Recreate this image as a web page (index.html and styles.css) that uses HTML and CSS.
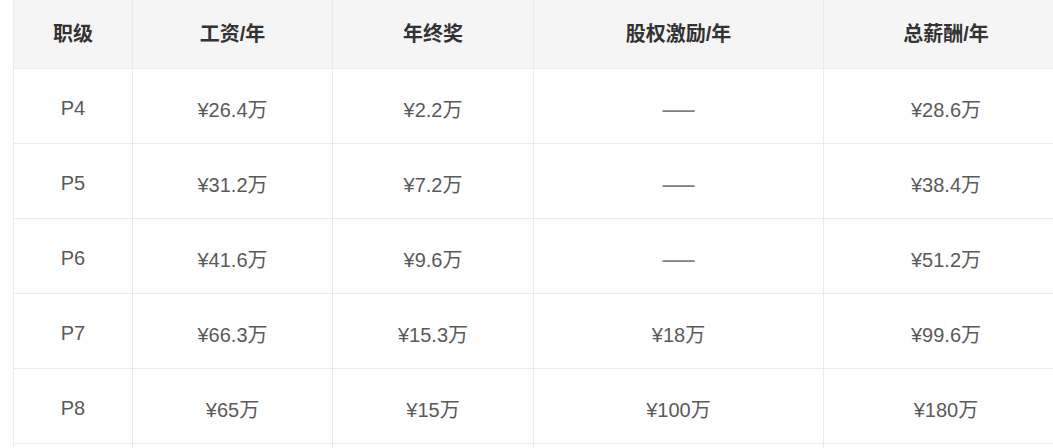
FILE: index.html
```html
<!DOCTYPE html>
<html lang="zh-CN">
<head>
<meta charset="utf-8">
<link rel="stylesheet" href="styles.css">
</head>
<body>
<div class="wrap">
<table class="salary">
  <colgroup>
    <col class="c1"><col class="c2"><col class="c3"><col class="c4"><col class="c5">
  </colgroup>
  <thead>
    <tr><th>职级</th><th>工资/年</th><th>年终奖</th><th>股权激励/年</th><th>总薪酬/年</th></tr>
  </thead>
  <tbody>
    <tr><td>P4</td><td>¥26.4万</td><td>¥2.2万</td><td class="dash">——</td><td>¥28.6万</td></tr>
    <tr><td>P5</td><td>¥31.2万</td><td>¥7.2万</td><td class="dash">——</td><td>¥38.4万</td></tr>
    <tr><td>P6</td><td>¥41.6万</td><td>¥9.6万</td><td class="dash">——</td><td>¥51.2万</td></tr>
    <tr><td>P7</td><td>¥66.3万</td><td>¥15.3万</td><td>¥18万</td><td>¥99.6万</td></tr>
    <tr><td>P8</td><td>¥65万</td><td>¥15万</td><td>¥100万</td><td>¥180万</td></tr>
    <tr><td></td><td></td><td></td><td></td><td></td></tr>
  </tbody>
</table>
</div>
</body>
</html>
```
FILE: styles.css
```css
html, body {
  margin: 0;
  padding: 0;
  background: #ffffff;
  overflow: hidden;
}
.wrap {
  padding-left: 13px;
  width: 1100px;
}
.salary {
  border-collapse: collapse;
  table-layout: fixed;
  width: 1055px;
  font-family: "Liberation Sans", "Noto Sans CJK SC", sans-serif;
  font-size: 20px;
}
.c1 { width: 119px; }
.c2 { width: 200px; }
.c3 { width: 201px; }
.c4 { width: 290px; }
.c5 { width: 245px; }
.salary th, .salary td {
  border: 1px solid #ebebeb;
  text-align: center;
  vertical-align: middle;
  padding: 0;
}
.salary thead th {
  border-top: none;
  height: 64px;
  background: #f5f5f5;
  color: #333333;
  font-weight: bold;
  padding-bottom: 4px;
}
.salary td {
  height: 69px;
  padding-top: 5px;
  color: #5a5a5a;
}
.salary td.dash {
  font-family: "Noto Sans CJK SC", sans-serif;
  font-weight: bold;
  color: #808080;
}
```
